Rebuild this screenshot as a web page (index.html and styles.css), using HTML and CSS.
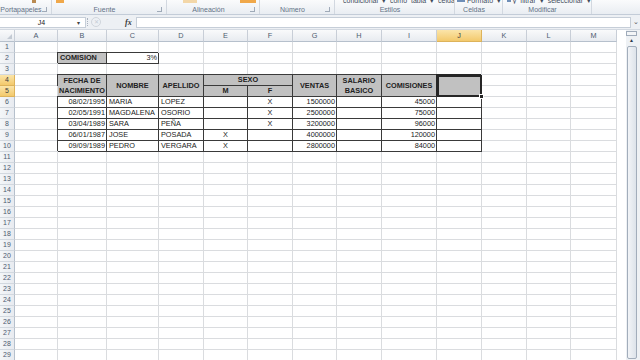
FILE: index.html
```html
<!DOCTYPE html>
<html lang="es">
<head>
  <meta charset="UTF-8">
  <meta name="viewport" content="width=device-width, initial-scale=1.0">
  <title>Libro1 - Excel</title>
  <link rel="stylesheet" href="styles.css">
</head>
<body>
<div class="app">

  <!-- cinta de opciones (solo la parte baja) -->
  <div class="ribbon">
    <div class="grp w-port">
      <div class="cut"><i class="ico brush"></i></div>
      <div class="glabel"><span>Portapapeles</span><i class="launch"></i></div>
    </div>
    <div class="grp w-fuente">
      <div class="cut"><i class="ico org"></i></div>
      <div class="glabel"><span>Fuente</span><i class="launch"></i></div>
    </div>
    <div class="grp w-alin">
      <div class="cut"><i class="ico pale s1"></i><i class="ico org s2"></i></div>
      <div class="glabel"><span>Alineación</span><i class="launch"></i></div>
    </div>
    <div class="grp w-num">
      <div class="cut"></div>
      <div class="glabel"><span>Número</span><i class="launch"></i></div>
    </div>
    <div class="grp w-est">
      <div class="cut"><span class="frag">condicional ▾ como tabla ▾ celda ▾</span></div>
      <div class="glabel"><span>Estilos</span></div>
    </div>
    <div class="grp w-cel">
      <div class="cut"><i class="ico blue"></i><span class="frag">Formato ▾</span></div>
      <div class="glabel"><span>Celdas</span></div>
    </div>
    <div class="grp w-mod">
      <div class="cut"><i class="ico blue"></i><span class="frag">y filtrar ▾ seleccionar ▾</span></div>
      <div class="glabel"><span>Modificar</span></div>
    </div>
    <div class="grp rest"></div>
  </div>

  <!-- barra de fórmulas -->
  <div class="fbar">
    <div class="namebox"><span>J4</span><i class="dd">▾</i></div>
    <div class="fbtns"><span class="grip"></span><span class="cancel">✕</span><span class="fx">fx</span></div>
    <div class="finput"></div>
    <div class="fexp">⌄</div>
  </div>

  <div class="main">
    <div class="sheet" id="sheet">
      <!-- encabezados de columna -->
      <div class="ch corner"><i class="tri"></i></div>
      <div class="ch">A</div>
      <div class="ch">B</div>
      <div class="ch">C</div>
      <div class="ch">D</div>
      <div class="ch">E</div>
      <div class="ch">F</div>
      <div class="ch">G</div>
      <div class="ch">H</div>
      <div class="ch">I</div>
      <div class="ch hl">J</div>
      <div class="ch">K</div>
      <div class="ch">L</div>
      <div class="ch">M</div>

      <!-- fila 1 -->
      <div class="rh">1</div>
      <div class="c"></div><div class="c"></div><div class="c"></div><div class="c"></div><div class="c"></div><div class="c"></div><div class="c"></div><div class="c"></div><div class="c"></div><div class="c"></div><div class="c"></div><div class="c"></div><div class="c"></div>

      <!-- fila 2 -->
      <div class="rh">2</div>
      <div class="c"></div>
      <div class="c t g b">COMISION</div>
      <div class="c t r">3%</div>
      <div class="c"></div><div class="c"></div><div class="c"></div><div class="c"></div><div class="c"></div><div class="c"></div><div class="c"></div><div class="c"></div><div class="c"></div><div class="c"></div>

      <!-- fila 3 -->
      <div class="rh">3</div>
      <div class="c"></div><div class="c"></div><div class="c"></div><div class="c"></div><div class="c"></div><div class="c"></div><div class="c"></div><div class="c"></div><div class="c"></div><div class="c"></div><div class="c"></div><div class="c"></div><div class="c"></div>

      <!-- filas 4 y 5: encabezado de la tabla -->
      <div class="rh hl">4</div>
      <div class="c"></div>
      <div class="c t g h se">FECHA DE<br>NACIMIENTO</div>
      <div class="c t g h se">NOMBRE</div>
      <div class="c t g h se">APELLIDO</div>
      <div class="c t g h sx">SEXO</div>
      <div class="c t g h se">VENTAS</div>
      <div class="c t g h se">SALARIO<br>BASICO</div>
      <div class="c t g h se">COMISIONES</div>
      <div class="c t g se sel"></div>
      <div class="c"></div><div class="c"></div><div class="c"></div>

      <div class="rh hl">5</div>
      <div class="c"></div>
      <div class="c t g h">M</div>
      <div class="c t g h">F</div>
      <div class="c"></div><div class="c"></div><div class="c"></div>

      <!-- datos -->
      <div class="rh">6</div>
      <div class="c"></div>
      <div class="c t r">08/02/1995</div>
      <div class="c t">MARIA</div>
      <div class="c t">LOPEZ</div>
      <div class="c t m"></div>
      <div class="c t m">X</div>
      <div class="c t r">1500000</div>
      <div class="c t"></div>
      <div class="c t r">45000</div>
      <div class="c t"></div>
      <div class="c"></div><div class="c"></div><div class="c"></div>

      <div class="rh">7</div>
      <div class="c"></div>
      <div class="c t r">02/05/1991</div>
      <div class="c t">MAGDALENA</div>
      <div class="c t">OSORIO</div>
      <div class="c t m"></div>
      <div class="c t m">X</div>
      <div class="c t r">2500000</div>
      <div class="c t"></div>
      <div class="c t r">75000</div>
      <div class="c t"></div>
      <div class="c"></div><div class="c"></div><div class="c"></div>

      <div class="rh">8</div>
      <div class="c"></div>
      <div class="c t r">03/04/1989</div>
      <div class="c t">SARA</div>
      <div class="c t">PEÑA</div>
      <div class="c t m"></div>
      <div class="c t m">X</div>
      <div class="c t r">3200000</div>
      <div class="c t"></div>
      <div class="c t r">96000</div>
      <div class="c t"></div>
      <div class="c"></div><div class="c"></div><div class="c"></div>

      <div class="rh">9</div>
      <div class="c"></div>
      <div class="c t r">06/01/1987</div>
      <div class="c t">JOSE</div>
      <div class="c t">POSADA</div>
      <div class="c t m">X</div>
      <div class="c t m"></div>
      <div class="c t r">4000000</div>
      <div class="c t"></div>
      <div class="c t r">120000</div>
      <div class="c t"></div>
      <div class="c"></div><div class="c"></div><div class="c"></div>

      <div class="rh">10</div>
      <div class="c"></div>
      <div class="c t r">09/09/1989</div>
      <div class="c t">PEDRO</div>
      <div class="c t">VERGARA</div>
      <div class="c t m">X</div>
      <div class="c t m"></div>
      <div class="c t r">2800000</div>
      <div class="c t"></div>
      <div class="c t r">84000</div>
      <div class="c t"></div>
      <div class="c"></div><div class="c"></div><div class="c"></div>
      <!-- filas vacías 11-29: las añade el script -->
    </div>

    <!-- barra de desplazamiento vertical -->
    <div class="vscroll">
      <div class="vs-split"></div>
      <div class="vs-up">▲</div>
      <div class="vs-thumb"></div>
    </div>
  </div>
</div>

<script>
  // filas vacías de la hoja
  var sheet = document.getElementById("sheet");
  var html = '';
  for (var r = 11; r <= 29; r++) {
    html += '<div class="rh">' + r + '</div>';
    for (var k = 0; k < 13; k++) {
      html += '<div class="c"></div>';
    }
  }
  sheet.insertAdjacentHTML('beforeend', html);
</script>
</body>
</html>
```

FILE: styles.css
```css
/* base */
body {
  margin: 0;
  font-family: 'Liberation Sans', Arial, sans-serif;
  background-color: #fff;
  color: #222;
  overflow: hidden;
}
.app {
  width: 640px;
  height: 360px;
  overflow: hidden;
  display: flex;
  flex-direction: column;
}

/* cinta */
.ribbon {
  height: 15px;
  flex: none;
  display: flex;
  box-sizing: border-box;
  background: linear-gradient(#fafbfc, #e9edf2);
  border-bottom: 1px solid #c3ccd8;
  font-size: 7px;
  color: #627186;
}
.grp {
  display: flex;
  flex-direction: column;
  box-sizing: border-box;
  border-right: 1px solid #d2d8e0;
}
.w-port { width: 52px; }
.w-fuente { width: 115px; }
.w-alin { width: 93px; }
.w-num { width: 75px; }
.w-est { width: 120px; }
.w-cel { width: 48px; }
.w-mod { width: 89px; }
.rest { flex: 1; border-right: none; }

.cut {
  height: 4px;
  overflow: hidden;
  display: flex;
  align-items: flex-end;
  gap: 2px;
  padding-left: 4px;
}
.w-est .cut { padding-left: 8px; }
.w-cel .cut { padding-left: 2px; }
.w-mod .cut { padding-left: 4px; }
.frag {
  line-height: 7px;
  white-space: nowrap;
  color: #3f4b5c;
  word-spacing: 2px;
}
.ico {
  display: block;
  width: 8px;
  height: 3px;
  align-self: flex-start;
}
.brush { background: #b98a52; width: 4px; margin-left: 28px; }
.org { background: #f0a84a; }
.pale { background: #f3d7a8; width: 14px; margin-left: 12px; }
.s2 { width: 16px; margin-left: 41px; }
.blue { background: #6f8fb8; width: 8px; height: 2px; }

.glabel {
  flex: 1;
  display: grid;
  grid-template-columns: 1fr 9px;
  align-items: center;
  text-align: center;
  white-space: nowrap;
}
.launch {
  width: 4px;
  height: 4px;
  border-right: 1px solid #8c99aa;
  border-bottom: 1px solid #8c99aa;
  opacity: 0.8;
}

/* barra de fórmulas */
.fbar {
  height: 15px;
  flex: none;
  display: flex;
  align-items: center;
  box-sizing: border-box;
  background-color: #edf0f4;
  border-bottom: 1px solid #d3d9e1;
  font-size: 7px;
}
.namebox {
  width: 86px;
  height: 11px;
  box-sizing: border-box;
  background: #fff;
  border: 1px solid #c6ced8;
  border-left: none;
  display: flex;
  align-items: center;
  color: #222;
}
.namebox span {
  flex: 1;
  text-align: center;
  padding-left: 6px;
}
.dd {
  font-style: normal;
  font-size: 6px;
  width: 8px;
  color: #444;
}
.fbtns {
  width: 50px;
  display: flex;
  align-items: center;
  color: #aab2bd;
}
.grip {
  width: 1px;
  height: 8px;
  margin: 0 2px 0 1px;
  border-left: 1px dotted #a9b2be;
}
.cancel {
  font-size: 6px;
  width: 8px;
  height: 8px;
  line-height: 8px;
  text-align: center;
  border: 1px solid #d0d5dc;
  border-radius: 50%;
  color: #c5ccd5;
}
.fx {
  margin-left: 24px;
  font-style: italic;
  font-weight: bold;
  font-family: 'Liberation Serif', serif;
  font-size: 8px;
  color: #3a3a3a;
}
.finput {
  flex: 1;
  height: 11px;
  box-sizing: border-box;
  background: #fff;
  border: 1px solid #c6ced8;
}
.fexp {
  width: 9px;
  text-align: center;
  font-size: 7px;
  line-height: 6px;
  color: #555;
}

/* hoja */
.main {
  flex: 1;
  display: flex;
  overflow: hidden;
}
.sheet {
  width: 617px;
  flex: none;
  display: grid;
  grid-template-columns: 15px 43px 49px 52px 45px 44px 45px 44px 45px 55px 45px 45px 44px 46px;
  grid-template-rows: 12px;
  grid-auto-rows: 11px;
  font-size: 7.3px;
  overflow: hidden;
}
.c {
  box-sizing: border-box;
  border-right: 1px solid #dadcdf;
  border-bottom: 1px solid #dadcdf;
  line-height: 10px;
  padding: 0 2px;
  white-space: nowrap;
  overflow: hidden;
}
.ch {
  box-sizing: border-box;
  background: linear-gradient(#f9fafb, #e8ebf0);
  border-right: 1px solid #c8ced7;
  border-bottom: 1px solid #b6c0cc;
  text-align: center;
  line-height: 11px;
  color: #4d5c70;
}
.corner {
  display: flex;
  align-items: flex-end;
  justify-content: flex-end;
  padding: 2px;
}
.tri {
  width: 0;
  height: 0;
  border-left: 5px solid transparent;
  border-bottom: 5px solid #c3cad3;
}
.rh {
  box-sizing: border-box;
  background: linear-gradient(90deg, #f4f6f8, #e8ebf0);
  border-right: 1px solid #b6c0cc;
  border-bottom: 1px solid #d2d8df;
  text-align: center;
  line-height: 10px;
  font-size: 7px;
  color: #4d5c70;
}
.hl {
  background: linear-gradient(#fbe5aa, #f3c96c);
  border-color: #ddb35b;
  color: #3d3d3d;
}

/* tabla con bordes */
.t {
  border-right-color: #3a3a3a;
  border-bottom-color: #3a3a3a;
  box-shadow: -1px -1px 0 #3a3a3a;
}
.g { background-color: #c1c1c1; }
.b { font-weight: bold; }
.r { text-align: right; padding-right: 1px; }
.m { text-align: center; }
.h {
  font-weight: bold;
  display: flex;
  align-items: center;
  justify-content: center;
  text-align: center;
  line-height: 10px;
  padding: 0;
}
.se { grid-row: span 2; }
.sx { grid-column: span 2; }

/* celda seleccionada */
.sel {
  position: relative;
  overflow: visible;
  border: 2px solid #262626;
  box-shadow: -1px -1px 0 #262626;
}
.sel::after {
  content: "";
  position: absolute;
  right: -4px;
  bottom: -4px;
  width: 3px;
  height: 3px;
  background: #262626;
  border: 1px solid #fff;
}

/* desplazamiento */
.vscroll {
  flex: 1;
  position: relative;
  background: linear-gradient(90deg, #fff 0, #fff 9px, #eef1f4 9px);
  display: flex;
  flex-direction: column;
  align-items: flex-end;
  padding-right: 3px;
}
.vs-split {
  width: 9px;
  height: 3px;
  margin-top: 1px;
  border: 1px solid #9fabba;
  background: #f3f5f7;
}
.vs-up {
  width: 11px;
  height: 8px;
  line-height: 8px;
  text-align: center;
  font-size: 5px;
  color: #2d3a4b;
}
.vs-thumb {
  width: 8px;
  height: 311px;
  margin-top: 2px;
  border: 1px solid #a2adbb;
  border-radius: 2px;
  background: linear-gradient(90deg, #f2f4f7, #dde3ea);
}
```
